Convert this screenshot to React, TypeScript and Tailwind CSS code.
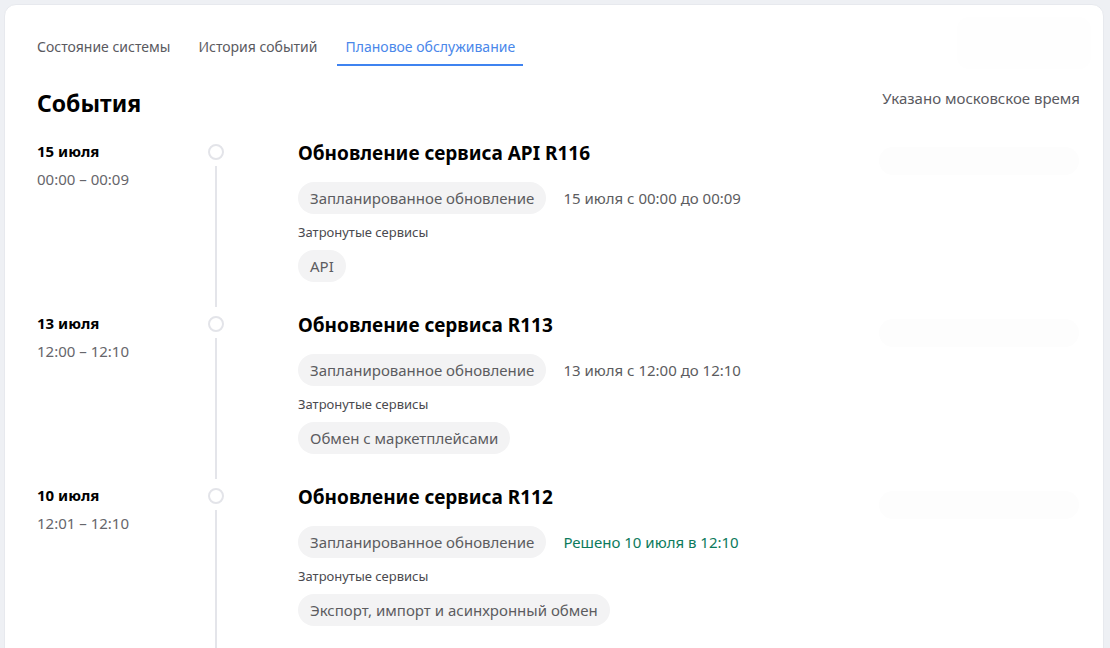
const tabs = [
  { label: "Состояние системы", active: false },
  { label: "История событий", active: false },
  { label: "Плановое обслуживание", active: true },
];

type Event = {
  date: string;
  time: string;
  title: string;
  kind: string;
  note: string;
  resolved?: boolean;
  services: string[];
};

const events: Event[] = [
  {
    date: "15 июля",
    time: "00:00 – 00:09",
    title: "Обновление сервиса API R116",
    kind: "Запланированное обновление",
    note: "15 июля с 00:00 до 00:09",
    services: ["API"],
  },
  {
    date: "13 июля",
    time: "12:00 – 12:10",
    title: "Обновление сервиса R113",
    kind: "Запланированное обновление",
    note: "13 июля с 12:00 до 12:10",
    services: ["Обмен с маркетплейсами"],
  },
  {
    date: "10 июля",
    time: "12:01 – 12:10",
    title: "Обновление сервиса R112",
    kind: "Запланированное обновление",
    note: "Решено 10 июля в 12:10",
    resolved: true,
    services: ["Экспорт, импорт и асинхронный обмен"],
  },
];

function Pill({ children }: { children: React.ReactNode }) {
  return (
    <span className="inline-flex h-8 items-center rounded-full bg-[#f3f3f4] px-3 text-[15px] text-[#5c5c60]">
      {children}
    </span>
  );
}

function EventRow({ ev }: { ev: Event }) {
  return (
    <div className="flex">
      <div className="w-[171px] shrink-0">
        <div className="text-[15px] font-bold leading-5 text-black">{ev.date}</div>
        <div className="mt-2 text-[15px] leading-5 text-[#66666b]">{ev.time}</div>
      </div>

      <div className="flex w-4 shrink-0 flex-col items-center">
        <div className="mt-[3px] h-4 w-4 rounded-full border-2 border-[#e3e4e9]" />
        <div className="my-[6px] w-[2px] flex-1 bg-[#e4e5ea]" />
      </div>

      <div className="ml-[74px] flex-1 pb-[31px]">
        <h3 className="text-[19px] font-bold leading-6 text-black">{ev.title}</h3>
        <div className="mt-[17px] flex items-center gap-[17px]">
          <Pill>{ev.kind}</Pill>
          <span
            className={
              ev.resolved
                ? "text-[15px] text-[#0c7a5c]"
                : "text-[15px] text-[#5c5c60]"
            }
          >
            {ev.note}
          </span>
        </div>
        <div className="mt-[9px] text-[13px] leading-[18px] text-[#4a4a4f]">
          Затронутые сервисы
        </div>
        <div className="mt-[9px] flex gap-2">
          {ev.services.map((s) => (
            <Pill key={s}>{s}</Pill>
          ))}
        </div>
      </div>

      <div className="mr-[24px] mt-[6px] h-[28px] w-[200px] shrink-0 rounded-full bg-[#fdfdfd]" />
    </div>
  );
}

export default function App() {
  return (
    <div
      className="min-h-screen bg-[#eef0f4] pl-[4px] pr-[6px] pt-[4px]"
      style={{ fontFamily: '"Noto Sans", "Open Sans", Arial, sans-serif' }}
    >
      <div className="min-h-[660px] rounded-t-xl border border-[#e7e9ee] bg-white pl-[32px] pt-[32px]">
        <div className="flex items-start">
          <nav className="-ml-2 flex gap-3">
            {tabs.map((t) => (
              <div
                key={t.label}
                className={
                  t.active
                    ? "border-b-2 border-[#3f83f0] px-2 pb-[7px] text-[14px] leading-5 text-[#4a87ea]"
                    : "border-b-2 border-transparent px-2 pb-[7px] text-[14px] leading-5 text-[#5a5a5f]"
                }
              >
                {t.label}
              </div>
            ))}
          </nav>
          <div className="-mt-[20px] ml-auto mr-[12px] h-[52px] w-[134px] rounded-xl bg-[#fefefe]" />
        </div>

        <div className="mt-[20px] flex items-start pr-[23px]">
          <h2 className="text-[23px] font-bold leading-7 text-black">События</h2>
          <span className="ml-auto -mt-[1px] text-[15px] leading-5 text-[#5a5a5f]">
            Указано московское время
          </span>
        </div>

        <div className="mt-[24px]">
          {events.map((ev) => (
            <EventRow key={ev.title} ev={ev} />
          ))}
        </div>
      </div>
    </div>
  );
}
